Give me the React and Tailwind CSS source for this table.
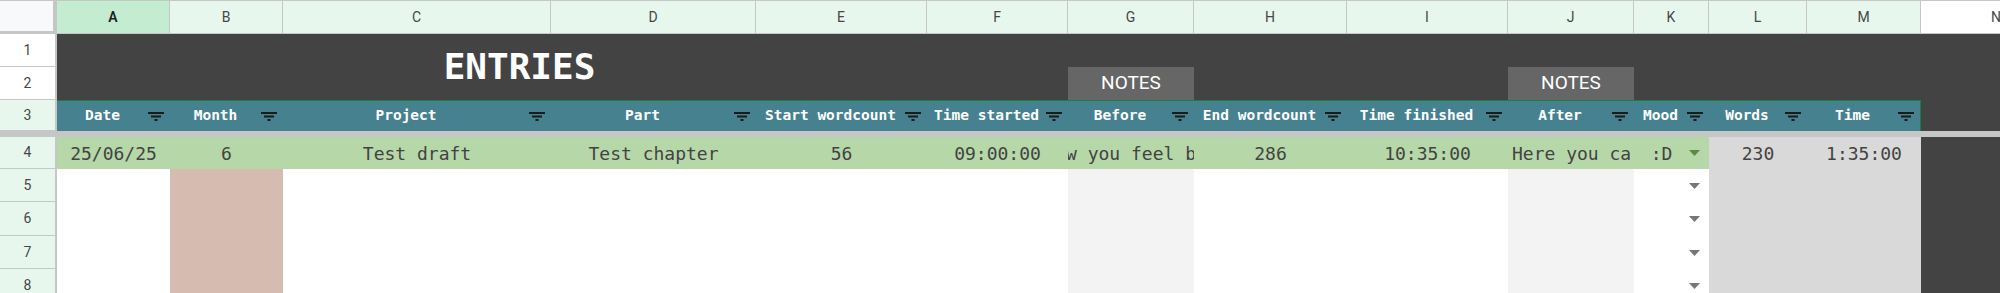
import React from 'react';

const MONO = "font-['DejaVu_Sans_Mono','Liberation_Mono',monospace]";
const UI = "font-['Roboto','Noto_Sans',sans-serif]";

const COLUMNS = [
  { letter: 'A', head: 'Date', value: '25/06/25', rest: 'bg-white' },
  { letter: 'B', head: 'Month', value: '6', rest: 'bg-[#d6bbb0]' },
  { letter: 'C', head: 'Project', value: 'Test draft', rest: 'bg-white' },
  { letter: 'D', head: 'Part', value: 'Test chapter', rest: 'bg-white' },
  { letter: 'E', head: 'Start wordcount', value: '56', rest: 'bg-white' },
  { letter: 'F', head: 'Time started', value: '09:00:00', rest: 'bg-white' },
  { letter: 'G', head: 'Before', value: 'Write down how you feel before writing', rest: 'bg-[#f3f3f3]', clip: 'center' },
  { letter: 'H', head: 'End wordcount', value: '286', rest: 'bg-white' },
  { letter: 'I', head: 'Time finished', value: '10:35:00', rest: 'bg-white' },
  { letter: 'J', head: 'After', value: 'Here you can write how you feel after writing', rest: 'bg-[#f3f3f3]', clip: 'left' },
  { letter: 'K', head: 'Mood', value: ':D', rest: 'bg-white', dropdown: true },
  { letter: 'L', head: 'Words', value: '230', rest: 'bg-[#d9d9d9]', first: 'bg-[#d9d9d9]' },
  { letter: 'M', head: 'Time', value: '1:35:00', rest: 'bg-[#d9d9d9]', first: 'bg-[#d9d9d9]', last: true },
];

const FilterIcon = () => (
  <svg width="16" height="9" viewBox="0 0 16 9" className="shrink-0 mr-[6px]" fill="#1b1b1b">
    <rect x="0" y="0" width="16" height="2" />
    <rect x="3" y="3.5" width="10" height="2" />
    <rect x="6.5" y="7" width="3" height="2" />
  </svg>
);

const Arrow = ({ color }) => (
  <svg width="11" height="6" viewBox="0 0 11 6" className="shrink-0 mr-[9px]">
    <path d="M0 0h11L5.5 6z" fill={color} />
  </svg>
);

const RowHead = ({ n, white }) => (
  <div
    className={`flex items-center justify-center border-r-2 border-b border-[#c4c7c5] text-[14px] text-[#444746] ${UI} ${
      white ? 'bg-white' : 'bg-[#e8f7ed]'
    }`}
  >
    {n}
  </div>
);

const FirstRowCell = ({ col }) => {
  const bg = col.first || 'bg-[#b6d7a8]';
  const text = `text-[18px] text-[#434343] whitespace-nowrap ${MONO}`;
  if (col.clip === 'center') {
    return (
      <div className={`flex items-center justify-center overflow-hidden ${bg}`}>
        <span className={`shrink-0 ${text}`}>{col.value}</span>
      </div>
    );
  }
  if (col.clip === 'left') {
    return (
      <div className={`flex items-center pl-1 pr-[4px] ${bg}`}>
        <div className="flex-1 overflow-hidden">
          <span className={text}>{col.value}</span>
        </div>
      </div>
    );
  }
  if (col.dropdown) {
    return (
      <div className={`flex items-center ${bg}`}>
        <span className={`flex-1 text-center ${text}`}>{col.value}</span>
        <Arrow color="#5a8a44" />
      </div>
    );
  }
  return (
    <div className={`flex items-center justify-center ${bg}`}>
      <span className={text}>{col.value}</span>
    </div>
  );
};

export default function App() {
  const lower = [5, 6, 7, 8];
  const notes = "font-['Liberation_Sans_Narrow','Roboto',sans-serif]";

  return (
    <div className="w-[2000px] h-[293px] overflow-hidden bg-white">
      <div className="grid grid-cols-[57px_113px_113px_268px_205px_171px_141px_126px_153px_161px_126px_75px_98px_114px_1fr] grid-rows-[34px_33px_33px_31px_6px_32px_33px_34px_33px_33px]">
        {/* title band, rows 1-2 */}
        <div className="col-[2/16] row-[2/4] bg-[#434343]" />
        <div className={`col-[4/6] row-[2/4] flex items-center justify-center text-white font-bold text-[36px] ${MONO}`}>
          ENTRIES
        </div>
        <div className={`col-[8] row-[3] flex items-center justify-center bg-[#666666] text-white text-[19px] ${notes}`}>
          NOTES
        </div>
        <div className={`col-[11] row-[3] flex items-center justify-center bg-[#666666] text-white text-[19px] ${notes}`}>
          NOTES
        </div>
        <div className="col-[1] row-[2] grid">
          <RowHead n={1} white />
        </div>
        <div className="col-[1] row-[3] grid">
          <RowHead n={2} white />
        </div>

        {/* column letters */}
        <div className="bg-[#f8f9fa] border-t border-r-4 border-b-[3px] border-[#c4c7c5]" />
        {COLUMNS.map((c) => (
          <div
            key={c.letter}
            className={`flex items-center justify-center border-t border-r border-b border-[#c4c7c5] text-[14px] ${UI} ${
              c.letter === 'A' ? 'bg-[#c4ecd1] font-semibold text-[#1f1f1f]' : 'bg-[#e8f7ed] text-[#444746]'
            }`}
          >
            {c.letter}
          </div>
        ))}
        <div className="overflow-hidden bg-white border-t border-b border-[#c4c7c5]">
          <div className={`w-[150px] h-full flex items-center justify-center text-[14px] text-[#444746] ${UI}`}>N</div>
        </div>

        {/* row 3: field headers */}
        <RowHead n={3} />
        {COLUMNS.map((c) => (
          <div
            key={c.letter}
            className={`flex items-center bg-[#45818e] border-t border-[#188038] ${c.last ? 'border-r' : ''}`}
          >
            <span className={`flex-1 text-center text-white font-bold text-[14.5px] whitespace-nowrap ${MONO}`}>{c.head}</span>
            <FilterIcon />
          </div>
        ))}
        <div className="bg-[#434343]" />

        {/* frozen divider */}
        <div className="col-span-full bg-[#c4c7c5]" />

        {/* row 4 */}
        <RowHead n={4} />
        {COLUMNS.map((c) => (
          <FirstRowCell key={c.letter} col={c} />
        ))}
        <div className="bg-[#434343]" />

        {/* rows 5-8 */}
        {lower.map((n) => (
          <React.Fragment key={n}>
            <RowHead n={n} />
            {COLUMNS.map((c) => (
              <div key={c.letter} className={`flex items-center justify-end ${c.rest}`}>
                {c.dropdown && <Arrow color="#777777" />}
              </div>
            ))}
            <div className="bg-[#434343]" />
          </React.Fragment>
        ))}
      </div>
    </div>
  );
}
